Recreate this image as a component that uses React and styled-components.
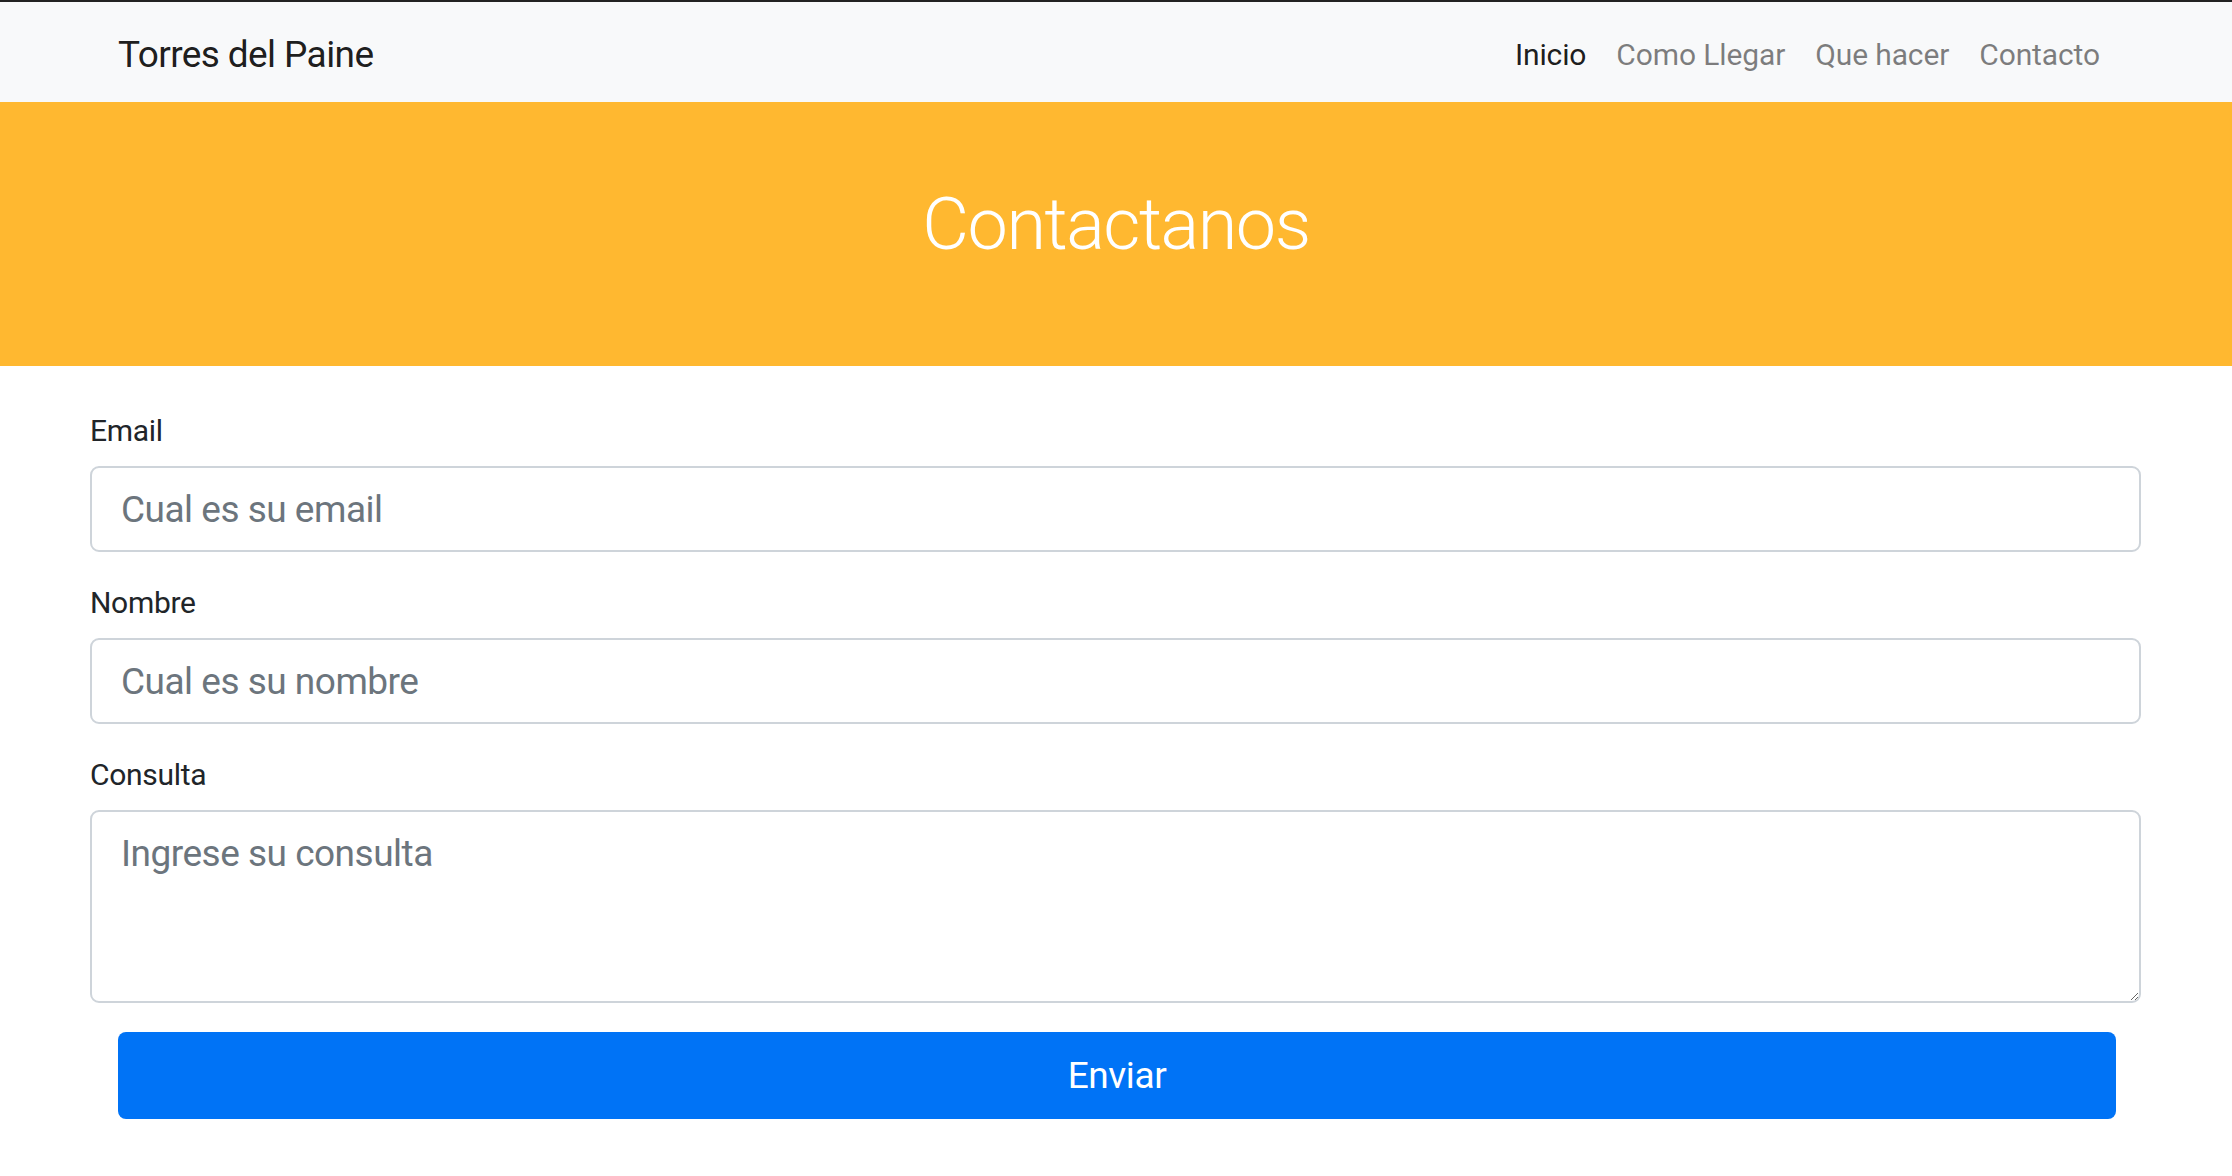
import React from "react";
import styled, { createGlobalStyle } from "styled-components";

const GlobalStyle = createGlobalStyle`
  * {
    box-sizing: border-box;
  }
  body {
    margin: 0;
    background: #fff;
    font-family: Roboto, "Liberation Sans", Arial, sans-serif;
    color: #212529;
  }
`;

const links = [
  { label: "Inicio", active: true },
  { label: "Como Llegar" },
  { label: "Que hacer" },
  { label: "Contacto" },
];

export default function App() {
  return (
    <>
      <GlobalStyle />
      <Page>
        <Navbar>
          <Brand href="#">Torres del Paine</Brand>
          <NavList>
            {links.map((link) => (
              <NavLink key={link.label} href="#" $active={link.active}>
                {link.label}
              </NavLink>
            ))}
          </NavList>
        </Navbar>

        <Hero>
          <Title>Contactanos</Title>
        </Hero>

        <Form onSubmit={(e) => e.preventDefault()}>
          <Group>
            <Label htmlFor="email">Email</Label>
            <Input id="email" type="email" placeholder="Cual es su email" />
          </Group>
          <Group>
            <Label htmlFor="nombre">Nombre</Label>
            <Input id="nombre" type="text" placeholder="Cual es su nombre" />
          </Group>
          <Group>
            <Label htmlFor="consulta">Consulta</Label>
            <TextArea id="consulta" placeholder="Ingrese su consulta" />
          </Group>
          <SubmitButton type="submit">Enviar</SubmitButton>
        </Form>
      </Page>
    </>
  );
}

const Page = styled.div`
  border-top: 2px solid #222;
  min-height: 100vh;
`;

const Navbar = styled.nav`
  display: flex;
  align-items: center;
  justify-content: space-between;
  height: 100px;
  padding: 5px 117px 0 118px;
  background-color: #f8f9fa;
`;

const Brand = styled.a`
  font-size: 37px;
  letter-spacing: -0.6px;
  color: rgba(0, 0, 0, 0.9);
  text-decoration: none;
  line-height: 1.5;
`;

const NavList = styled.div`
  display: flex;
  align-items: center;
`;

const NavLink = styled.a`
  padding: 0 15px;
  font-size: 30px;
  letter-spacing: -0.12px;
  line-height: 1.5;
  text-decoration: none;
  color: ${(p) => (p.$active ? "rgba(0, 0, 0, 0.9)" : "rgba(0, 0, 0, 0.5)")};
`;

const Hero = styled.header`
  background-color: #ffb830;
  padding: 78px 0 96px;
  text-align: center;
`;

const Title = styled.h1`
  margin: 0;
  font-size: 72px;
  font-weight: 300;
  letter-spacing: -1.5px;
  line-height: 1.25;
  color: #fff;
`;

const Form = styled.form`
  display: flex;
  flex-direction: column;
  padding: 42px 91px 60px 90px;
`;

const Group = styled.div`
  display: flex;
  flex-direction: column;
  margin-bottom: 28px;

  &:nth-last-of-type(1) {
    margin-bottom: 0;
  }
`;

const Label = styled.label`
  font-size: 30px;
  letter-spacing: -0.3px;
  line-height: 1.5;
  color: #212529;
  margin-bottom: 13px;
`;

const fieldStyles = `
  width: 100%;
  border: 2px solid #ced4da;
  border-radius: 9px;
  background: #fff;
  font-family: Roboto, "Liberation Sans", Arial, sans-serif;
  font-size: 37px;
  letter-spacing: -0.5px;
  color: #495057;
  outline: none;

  &::placeholder {
    color: #6c757d;
    opacity: 1;
  }
`;

const Input = styled.input`
  ${fieldStyles};
  height: 86px;
  padding: 0 29px;
`;

const TextArea = styled.textarea`
  ${fieldStyles};
  height: 193px;
  padding: 14px 29px;
  line-height: 1.5;
  resize: vertical;
`;

const SubmitButton = styled.button`
  margin: 29px 25px 0 28px;
  height: 87px;
  border: none;
  border-radius: 8px;
  background-color: #0073f6;
  color: #fff;
  font-family: Roboto, "Liberation Sans", Arial, sans-serif;
  font-size: 37px;
  letter-spacing: -0.4px;
  cursor: pointer;
`;
